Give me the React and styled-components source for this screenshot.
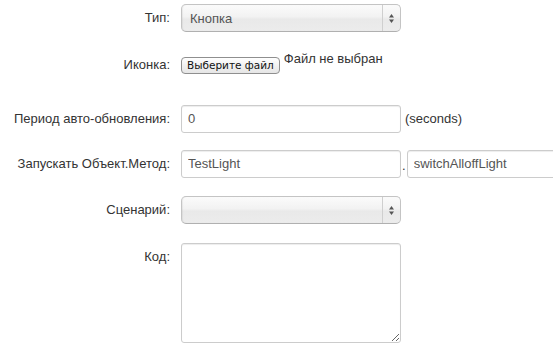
import React from "react";
import styled, { createGlobalStyle } from "styled-components";

const Global = createGlobalStyle`
  html, body { margin: 0; padding: 0; background: #fff; overflow: hidden; }
  body { font-family: "Liberation Sans", Arial, sans-serif; font-size: 13px; color: #333; }
`;

const Form = styled.form`
  padding-top: 4px;
  width: 553px;
  overflow: hidden;
`;

const Row = styled.div`
  display: grid;
  grid-template-columns: 170px auto;
  column-gap: 11px;
  align-items: start;
  margin-top: ${(p) => p.$mt || 0}px;
  min-height: ${(p) => p.$h || 28}px;
`;

const Label = styled.label`
  text-align: right;
  padding-top: ${(p) => (p.$pt != null ? p.$pt : 5)}px;
  line-height: 18px;
  font-size: 13px;
  color: #333;
  white-space: nowrap;
`;

const Controls = styled.div`
  display: flex;
  align-items: ${(p) => p.$align || "center"};
  padding-top: ${(p) => p.$pt || 0}px;
  white-space: nowrap;
`;

const SelectWrap = styled.div`
  position: relative;
  width: 220px;
  height: 28px;
`;

const Select = styled.select`
  appearance: none;
  -webkit-appearance: none;
  width: 220px;
  height: 28px;
  box-sizing: border-box;
  border: 1px solid #c4c4c4;
  border-bottom-color: #b0b0b0;
  border-radius: 5px;
  padding: 0 0 0 8px;
  font-family: "Liberation Sans", Arial, sans-serif;
  font-size: 13px;
  color: #555;
  background: linear-gradient(#fbfbfb 0%, #f2f2f2 45%, #e9e9e9 55%, #ececec 100%);
  box-shadow: inset 1px 0 1px rgba(0, 0, 0, 0.06);
  outline: none;
`;

const Arrow = styled.div`
  position: absolute;
  top: 1px;
  right: 1px;
  bottom: 1px;
  width: 17px;
  border-left: 1px solid #cfcfcf;
  display: flex;
  align-items: center;
  justify-content: center;
  pointer-events: none;
`;

const FileButton = styled.button`
  box-sizing: border-box;
  height: 17px;
  padding: 0 5px;
  border: 1px solid #8f8f8f;
  border-radius: 4px;
  background: linear-gradient(#ffffff, #f1f1f1 50%, #e6e6e6);
  font-family: "DejaVu Sans", sans-serif;
  font-size: 10.5px;
  color: #111;
  line-height: 15px;
  cursor: default;
`;

const FileText = styled.span`
  margin-left: 4px;
  margin-top: -6px;
  font-size: 13px;
  color: #333;
`;

const Input = styled.input`
  box-sizing: border-box;
  width: ${(p) => p.$w || 220}px;
  flex: none;
  height: 28px;
  padding: 3px 6px 5px 6px;
  border: 1px solid #cccccc;
  border-radius: 3px;
  box-shadow: inset 0 1px 1px rgba(0, 0, 0, 0.075);
  font-family: "Liberation Sans", Arial, sans-serif;
  font-size: 13px;
  color: #555;
  background: #fff;
  outline: none;
`;

const Addon = styled.span`
  margin-left: ${(p) => p.$ml || 4}px;
  margin-right: ${(p) => p.$mr || 0}px;
  font-size: 13px;
  color: #333;
  align-self: ${(p) => p.$self || "center"};
  margin-top: ${(p) => p.$mt || 0}px;
`;

const TextArea = styled.textarea`
  box-sizing: border-box;
  width: 220px;
  height: 100px;
  border: 1px solid #cccccc;
  border-radius: 3px;
  box-shadow: inset 0 1px 1px rgba(0, 0, 0, 0.075);
  font-family: "Liberation Sans", Arial, sans-serif;
  font-size: 13px;
  color: #555;
  padding: 4px 6px;
  outline: none;
  display: block;
`;

function Arrows() {
  return (
    <Arrow>
      <svg width="7" height="11" viewBox="0 0 7 11">
        <path d="M3.5 1 L6 4.5 L1 4.5 Z" fill="#555" />
        <path d="M3.5 10 L6 6.5 L1 6.5 Z" fill="#555" />
      </svg>
    </Arrow>
  );
}

export default function App() {
  return (
    <>
      <Global />
      <Form onSubmit={(e) => e.preventDefault()}>
        <Row>
          <Label>Тип:</Label>
          <Controls>
            <SelectWrap>
              <Select defaultValue="button">
                <option value="button">Кнопка</option>
              </Select>
              <Arrows />
            </SelectWrap>
          </Controls>
        </Row>

        <Row $mt={19} $h={36}>
          <Label>Иконка:</Label>
          <Controls $pt={6} $align="flex-start">
            <FileButton type="button">Выберите файл</FileButton>
            <FileText>Файл не выбран</FileText>
          </Controls>
        </Row>

        <Row $mt={18}>
          <Label>Период авто-обновления:</Label>
          <Controls>
            <Input defaultValue="0" />
            <Addon $ml={4} $mt={-2}>(seconds)</Addon>
          </Controls>
        </Row>

        <Row $mt={17}>
          <Label>Запускать Объект.Метод:</Label>
          <Controls>
            <Input defaultValue="TestLight" />
            <Addon $ml={1} $mr={1} $self="flex-start" $mt={8}>.</Addon>
            <Input defaultValue="switchAlloffLight" />
          </Controls>
        </Row>

        <Row $mt={18}>
          <Label>Сценарий:</Label>
          <Controls>
            <SelectWrap>
              <Select defaultValue="">
                <option value=""></option>
              </Select>
              <Arrows />
            </SelectWrap>
          </Controls>
        </Row>

        <Row $mt={19} $h={100}>
          <Label>Код:</Label>
          <Controls $align="flex-start">
            <TextArea />
          </Controls>
        </Row>
      </Form>
    </>
  );
}
